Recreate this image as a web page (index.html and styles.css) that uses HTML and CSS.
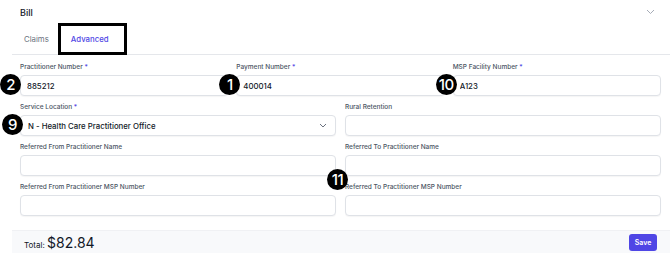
FILE: index.html
```html
<!DOCTYPE html>
<html>
<head>
    <title>Bill - Advanced</title>
    <link rel="stylesheet" href="styles.css">
</head>
<body>
    <div class="panel">
        <div class="panel-head">
            <span class="panel-title">Bill</span>
            <svg class="head-chevron" width="9" height="6" viewBox="0 0 9 6">
                <path d="M1 1 L4.5 4.5 L8 1" fill="none" stroke="#9ca3af" stroke-width="0.9"/>
            </svg>
        </div>

        <div class="tabs">
            <button class="tab">Claims</button>
            <button class="tab tab-active">Advanced</button>
        </div>

        <div class="form">
            <div class="grid3">
                <div class="field">
                    <label>Practitioner Number <span class="req">*</span></label>
                    <input type="text" value="885212">
                    <span class="badge badge-input badge-far">2</span>
                </div>
                <div class="field">
                    <label>Payment Number <span class="req">*</span></label>
                    <input type="text" value="400014">
                    <span class="badge badge-input badge-near">1</span>
                </div>
                <div class="field">
                    <label>MSP Facility Number <span class="req">*</span></label>
                    <input type="text" value="A123">
                    <span class="badge badge-input badge-near">10</span>
                </div>
            </div>

            <div class="grid2">
                <div class="field">
                    <label>Service Location <span class="req">*</span></label>
                    <div class="select">
                        <span>N - Health Care Practitioner Office</span>
                        <svg width="8" height="5" viewBox="0 0 8 5">
                            <path d="M1 1 L4 4 L7 1" fill="none" stroke="#6b7280" stroke-width="1"/>
                        </svg>
                    </div>
                    <span class="badge badge-input badge-mid">9</span>
                </div>
                <div class="field">
                    <label>Rural Retention</label>
                    <input type="text">
                </div>
                <div class="field">
                    <label>Referred From Practitioner Name</label>
                    <input type="text">
                </div>
                <div class="field">
                    <label>Referred To Practitioner Name</label>
                    <input type="text">
                </div>
                <div class="field">
                    <label>Referred From Practitioner MSP Number</label>
                    <input type="text">
                </div>
                <div class="field">
                    <label>Referred To Practitioner MSP Number</label>
                    <input type="text">
                    <span class="badge badge-label badge-mid">11</span>
                </div>
            </div>
        </div>

        <div class="footer">
            <div class="total">Total: <span class="amount">$82.84</span></div>
            <button class="save-btn">Save</button>
        </div>
    </div>
</body>
</html>
```

FILE: styles.css
```css
* {
    margin: 0;
    padding: 0;
    box-sizing: border-box;
}

body {
    font-family: Inter, "Noto Sans", sans-serif;
    background-color: #ffffff;
    color: #111827;
}

.panel {
    padding-left: 12px;
}

.panel-head {
    display: flex;
    align-items: center;
    justify-content: space-between;
    height: 24px;
    padding: 0 15px 0 8px;
}

.panel-title {
    font-size: 9px;
    font-weight: 500;
    color: #111827;
}

.tabs {
    display: flex;
    height: 31px;
    border-bottom: 1px solid #e5e7eb;
}

.tab {
    background: none;
    border: none;
    font-family: inherit;
    font-size: 7.8px;
    color: #6b7280;
    padding: 0 10px 0 12px;
    height: 30px;
}

.tab-active {
    color: #4f46e5;
    font-weight: 500;
    padding: 0 17px 0 12px;
    outline: 3px solid #000;
    outline-offset: -2px;
}

.form {
    padding: 8px 9px 0 8px;
    display: flex;
    flex-direction: column;
    gap: 7px;
}

.grid3 {
    display: grid;
    grid-template-columns: 1fr 1fr 1fr;
    column-gap: 8px;
}

.grid2 {
    display: grid;
    grid-template-columns: 1fr 1fr;
    column-gap: 9px;
    row-gap: 7px;
}

.field {
    position: relative;
}

label {
    display: block;
    font-size: 6.5px;
    line-height: 9px;
    font-weight: 500;
    color: #4b5563;
    margin-bottom: 3px;
}

.req {
    color: #4f46e5;
}

input, .select {
    display: block;
    width: 100%;
    height: 21px;
    padding: 0 6px;
    border: 1px solid #dfe2e7;
    border-radius: 4px;
    box-shadow: 0 1px 1px rgba(0, 0, 0, 0.04);
    font-family: inherit;
    font-size: 7.8px;
    font-weight: 500;
    color: #111827;
    background: #fff;
}

.select {
    display: flex;
    align-items: center;
    justify-content: space-between;
    padding: 0 8px 0 7px;
}

/* numbered annotation markers */
.badge {
    position: absolute;
    width: 21px;
    height: 21px;
    border-radius: 50%;
    background: #000;
    color: #fff;
    font-size: 15px;
    font-weight: 500;
    line-height: 21px;
    text-align: center;
    letter-spacing: -0.5px;
}

.badge-input {
    top: 11px;
}

.badge-label {
    top: -14px;
}

.badge-far {
    left: -20px;
}

.badge-mid {
    left: -18px;
}

.badge-near {
    left: -17px;
}

.footer {
    margin-top: 14px;
    display: flex;
    align-items: center;
    justify-content: space-between;
    background-color: #f8f9fb;
    border-top: 1px solid #f0f1f4;
    padding: 3px 13px 6px 12px;
}

.total {
    font-size: 8px;
    color: #111827;
}

.amount {
    font-size: 14px;
}

.save-btn {
    width: 28px;
    height: 17px;
    border: none;
    border-radius: 3px;
    background-color: #4f46e5;
    color: #fff;
    font-family: inherit;
    font-size: 7px;
    font-weight: 600;
}
```
